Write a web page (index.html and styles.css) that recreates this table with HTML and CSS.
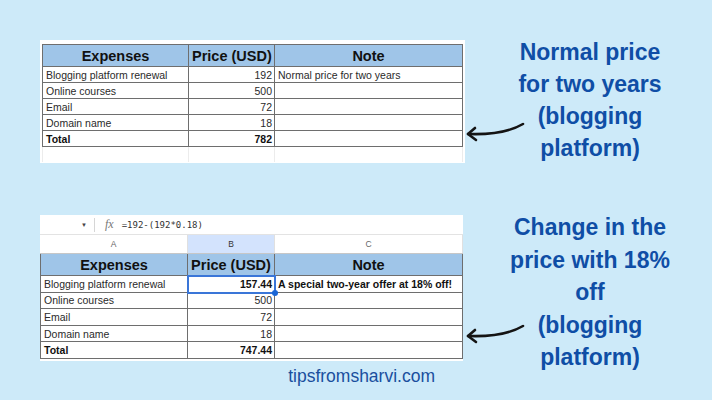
FILE: index.html
```html
<!DOCTYPE html>
<html lang="en">
<head>
<meta charset="utf-8">
<title>Blogging expenses</title>
<link rel="stylesheet" href="styles.css">
</head>
<body>
<main class="page">
  <section class="row row-top">
    <div class="sheet sheet-plain">
      <table class="grid">
        <colgroup><col class="c-a"><col class="c-b"><col class="c-c"></colgroup>
        <thead>
          <tr class="head"><th>Expenses</th><th>Price (USD)</th><th>Note</th></tr>
        </thead>
        <tbody>
          <tr><td>Blogging platform renewal</td><td class="num">192</td><td>Normal price for two years</td></tr>
          <tr><td>Online courses</td><td class="num">500</td><td></td></tr>
          <tr><td>Email</td><td class="num">72</td><td></td></tr>
          <tr><td>Domain name</td><td class="num">18</td><td></td></tr>
          <tr class="total"><td>Total</td><td class="num">782</td><td></td></tr>
          <tr class="blank"><td></td><td></td><td></td></tr>
        </tbody>
      </table>
    </div>
    <svg class="arrow arrow-top" viewBox="0 0 62 24" width="62" height="24" aria-hidden="true">
      <path d="M58 4 C 46 11, 28 15, 3 14" />
      <path d="M10 8 L3 14 L11 20" />
    </svg>
    <p class="caption">Normal price<br>for two years<br>(blogging<br>platform)</p>
  </section>

  <section class="row row-bottom">
    <div class="stack">
      <div class="sheet sheet-edit">
        <div class="formula">
          <span class="caret">&#9660;</span>
          <span class="divider"></span>
          <span class="fx">fx</span>
          <span class="formula-text">=192-(192*0.18)</span>
        </div>
        <div class="colheads">
          <span class="colhead">A</span>
          <span class="colhead colhead-active">B</span>
          <span class="colhead">C</span>
        </div>
        <table class="grid grid-edit">
          <colgroup><col class="e-a"><col class="e-b"><col class="e-c"></colgroup>
          <thead>
            <tr class="head"><th>Expenses</th><th>Price (USD)</th><th>Note</th></tr>
          </thead>
          <tbody>
            <tr><td>Blogging platform renewal</td><td class="num bold selected">157.44</td><td class="bold">A special two-year offer at 18% off!</td></tr>
            <tr><td>Online courses</td><td class="num">500</td><td></td></tr>
            <tr><td>Email</td><td class="num">72</td><td></td></tr>
            <tr><td>Domain name</td><td class="num">18</td><td></td></tr>
            <tr class="total"><td>Total</td><td class="num">747.44</td><td></td></tr>
          </tbody>
        </table>
      </div>
      <p class="site">tipsfromsharvi.com</p>
    </div>
    <svg class="arrow arrow-bottom" viewBox="0 0 62 24" width="62" height="24" aria-hidden="true">
      <path d="M58 4 C 46 11, 28 15, 3 14" />
      <path d="M10 8 L3 14 L11 20" />
    </svg>
    <p class="caption caption-long">Change in the<br>price with 18%<br>off<br>(blogging<br>platform)</p>
  </section>
</main>
</body>
</html>
```

FILE: styles.css
```css
html, body {
  margin: 0;
  padding: 0;
}

body {
  background: #cdeaf9;
  font-family: "Liberation Sans", Arial, sans-serif;
  color: #222;
}

.page {
  width: 712px;
  height: 400px;
  box-sizing: border-box;
  padding: 36px 0 0 40px;
  overflow: hidden;
}

.row {
  display: flex;
  align-items: flex-start;
}

.row-bottom {
  margin-top: 47px;
}

/* ---------- sheets ---------- */
.sheet {
  background: #fff;
  box-sizing: border-box;
}

.sheet-plain {
  width: 425px;
  height: 123px;
  margin-top: 4px;
  padding: 4px 0 0 2px;
}

.stack {
  width: 425px;
  display: flex;
  flex-direction: column;
}

.sheet-edit {
  width: 423px;
  height: 146px;
  margin-top: 4px;
}

.grid {
  border-collapse: separate;
  border-spacing: 0;
  table-layout: fixed;
  width: 421px;
}

.c-a { width: 147px; }
.c-b { width: 86px; }
.c-c { width: 188px; }

.e-a { width: 148px; }
.e-b { width: 87px; }
.e-c { width: 188px; }

.grid th,
.grid td {
  box-sizing: border-box;
  border-right: 1px solid #6e6e6e;
  border-bottom: 1px solid #6e6e6e;
  padding: 0 3px;
  height: 16px;
  font-size: 10.5px;
  line-height: 12px;
  white-space: nowrap;
  overflow: visible;
  text-align: left;
  vertical-align: middle;
  color: #2a2a2a;
}

.grid th:first-child,
.grid td:first-child {
  border-left: 1px solid #6e6e6e;
}

.grid .head th {
  height: 23px;
  border-top: 1px solid #6e6e6e;
  background: #9fc5e8;
  font-size: 14.5px;
  font-weight: 700;
  text-align: center;
  color: #111;
}

.grid .num {
  text-align: right;
  padding-right: 2px;
}

.grid .bold,
.grid .total td {
  font-weight: 700;
  color: #111;
}

.grid .blank td {
  height: 15px;
  border-bottom: none;
  border-right-color: #ececec;
}

.grid .blank td:first-child {
  border-left-color: #ececec;
}

.grid-edit {
  width: 423px;
}

.grid-edit .head th {
  height: 22px;
  border-top: none;
}

.grid-edit td {
  height: 16.6px;
}

.grid .selected {
  position: relative;
  outline: 2px solid #3a76d8;
  outline-offset: -1px;
}

.grid .selected::after {
  content: "";
  position: absolute;
  right: -4px;
  bottom: -4px;
  width: 6px;
  height: 6px;
  border-radius: 50%;
  background: #1a66d6;
}

/* formula bar */
.formula {
  height: 20px;
  box-sizing: border-box;
  border-bottom: 1px solid #e3e3e3;
  display: flex;
  align-items: center;
  padding-left: 41px;
}

.caret {
  font-size: 6px;
  color: #444;
}

.divider {
  width: 1px;
  height: 14px;
  background: #d6d6d6;
  margin-left: 7px;
}

.fx {
  margin-left: 10px;
  font-family: "Liberation Serif", serif;
  font-style: italic;
  font-size: 12px;
  color: #777;
}

.formula-text {
  margin-left: 8px;
  font-family: "DejaVu Sans Mono", "Liberation Mono", monospace;
  font-size: 9px;
  color: #333;
}

.colheads {
  display: grid;
  grid-template-columns: 148px 87px 188px;
  height: 19px;
  box-sizing: border-box;
  border-bottom: 1px solid #c7c7c7;
}

.colhead {
  display: flex;
  align-items: center;
  justify-content: center;
  font-size: 8.5px;
  color: #666;
  border-right: 1px solid #e0e0e0;
}

.colhead-active {
  background: #d3e3fd;
  color: #333;
}

/* ---------- arrows & captions ---------- */
.arrow {
  flex: none;
  margin-right: -18px;
  overflow: visible;
}

.arrow path {
  fill: none;
  stroke: #141414;
  stroke-width: 2.6;
  stroke-linecap: round;
  stroke-linejoin: round;
}

.arrow-top {
  margin-top: 84px;
}

.arrow-bottom {
  margin-top: 111px;
}

.caption {
  margin: 0;
  width: 162px;
  flex: none;
  text-align: center;
  font-size: 23px;
  font-weight: 700;
  line-height: 32px;
  color: #0f4ea6;
}

.caption-long {
  line-height: 32.5px;
}

.site {
  margin: 5px 0 0;
  text-align: right;
  padding-right: 30px;
  font-size: 17.5px;
  line-height: 20px;
  color: #1a4f9e;
}
```
